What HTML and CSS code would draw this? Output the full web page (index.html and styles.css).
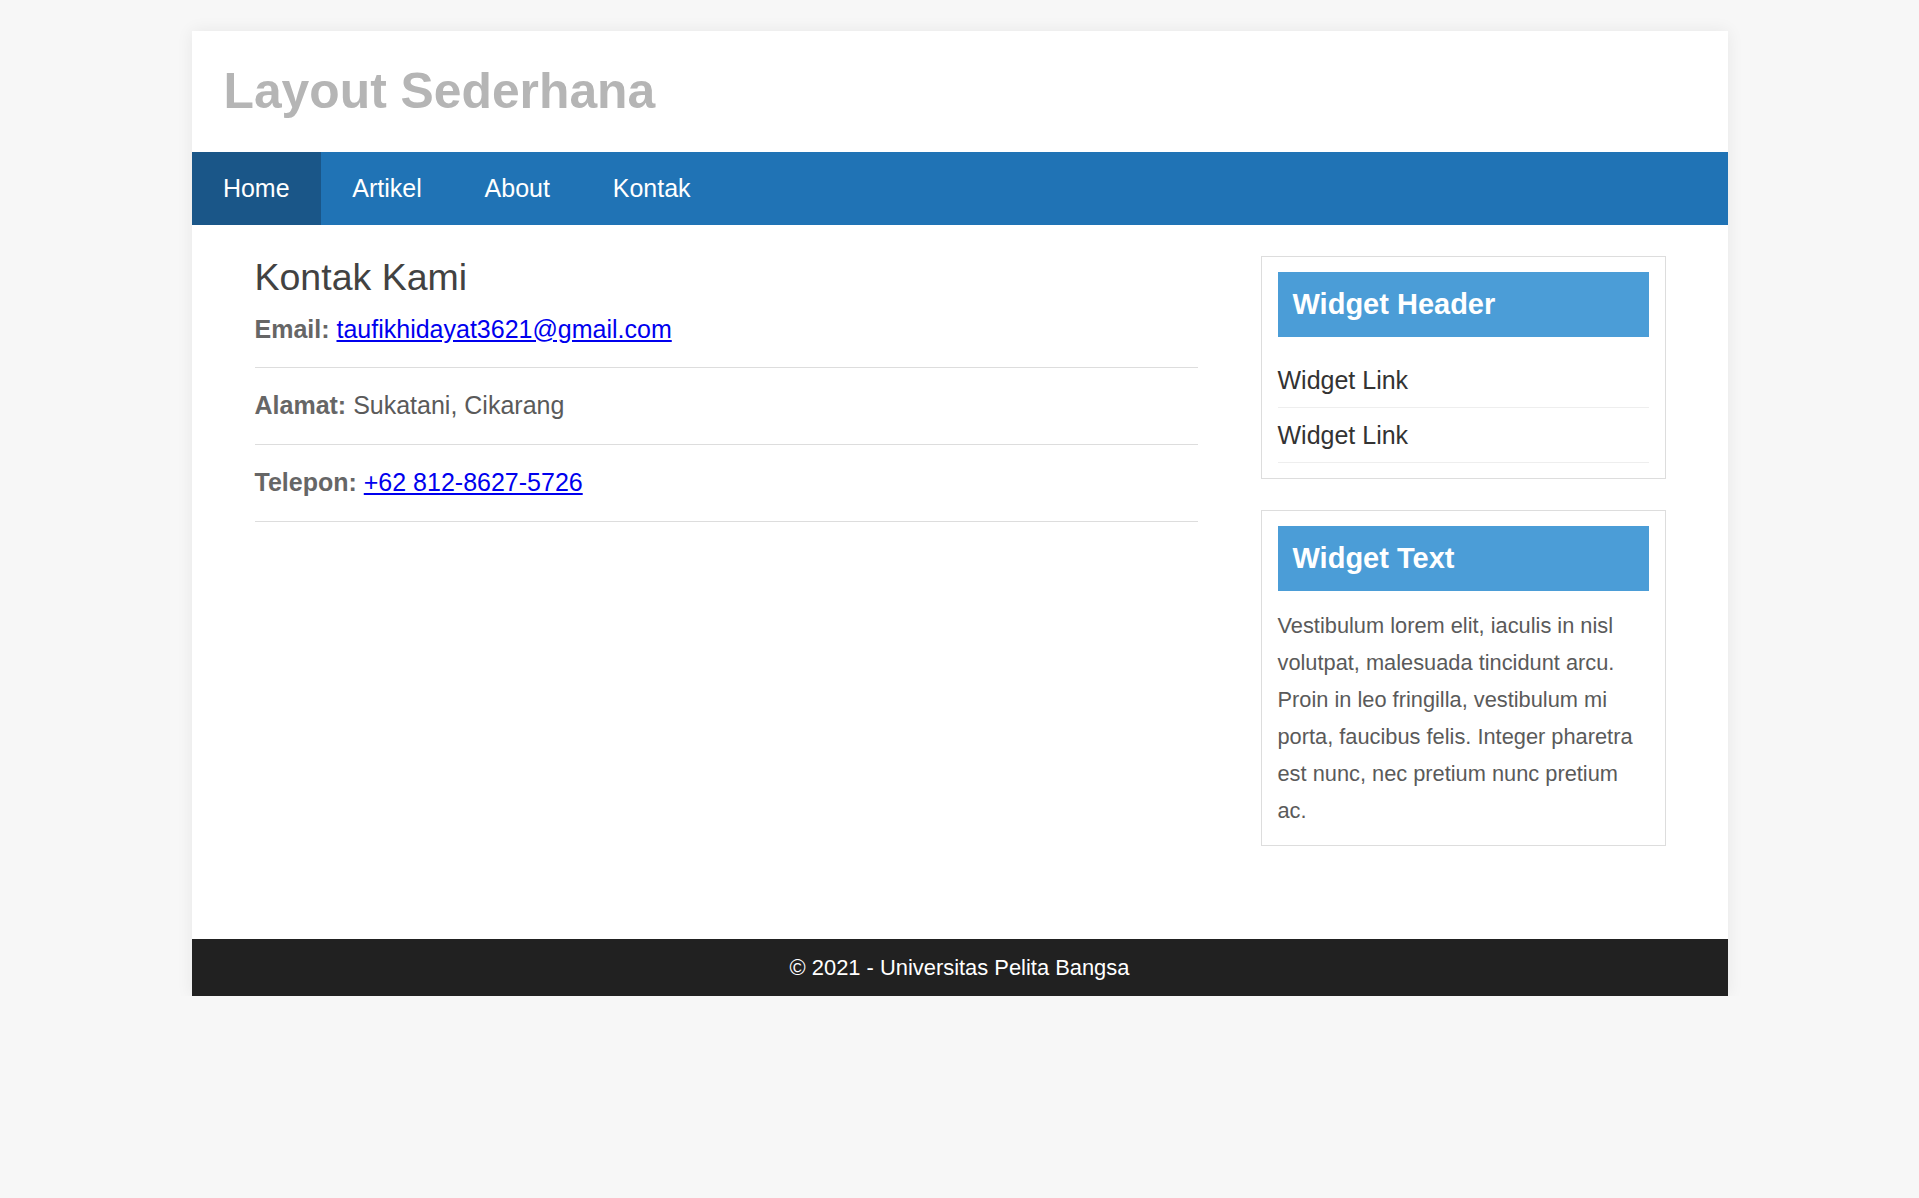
FILE: index.html
```html
<!DOCTYPE html>
<html lang="id">
<head>
<meta charset="utf-8">
<title>Layout Sederhana</title>
<link rel="stylesheet" href="styles.css">
</head>
<body>
<div class="container">
  <header class="site-header">
    <h1 class="site-title">Layout Sederhana</h1>
  </header>
  <nav class="nav">
    <a class="nav-link active" href="#">Home</a>
    <a class="nav-link" href="#">Artikel</a>
    <a class="nav-link" href="#">About</a>
    <a class="nav-link" href="#">Kontak</a>
  </nav>
  <div class="content">
    <main class="main">
      <h2 class="page-title">Kontak Kami</h2>
      <p class="contact-item first"><b class="label">Email:</b> <a class="link" href="#">taufikhidayat3621@gmail.com</a></p>
      <p class="contact-item"><b class="label">Alamat:</b> Sukatani, Cikarang</p>
      <p class="contact-item"><b class="label">Telepon:</b> <a class="link" href="#">+62 812-8627-5726</a></p>
    </main>
    <aside class="sidebar">
      <div class="widget">
        <h3 class="widget-title">Widget Header</h3>
        <ul class="widget-list">
          <li class="widget-item"><a class="widget-link" href="#">Widget Link</a></li>
          <li class="widget-item"><a class="widget-link" href="#">Widget Link</a></li>
        </ul>
      </div>
      <div class="widget">
        <h3 class="widget-title">Widget Text</h3>
        <p class="widget-text">Vestibulum lorem elit, iaculis in nisl volutpat, malesuada tincidunt arcu. Proin in leo fringilla, vestibulum mi porta, faucibus felis. Integer pharetra est nunc, nec pretium nunc pretium ac.</p>
      </div>
    </aside>
  </div>
  <footer class="footer">© 2021 - Universitas Pelita Bangsa</footer>
</div>
</body>
</html>
```

FILE: styles.css
```css
* {
  margin: 0;
  padding: 0;
  box-sizing: border-box;
}

body {
  background: #f7f7f7;
  font-family: "Liberation Sans", Arial, sans-serif;
  color: #5a5a5a;
}

.container {
  width: 1536px;
  margin: 31px auto 0;
  background: #ffffff;
  box-shadow: 0 0 16px rgba(0, 0, 0, 0.07);
}

.site-header {
  height: 121px;
  padding: 0 32px;
  display: flex;
  align-items: center;
}

.site-title {
  font-size: 49.8px;
  font-weight: bold;
  color: #b5b5b5;
  line-height: 56px;
  margin-top: -1px;
}

.nav {
  display: flex;
  background: #2073b5;
}

.nav-link {
  display: block;
  padding: 0 31.4px;
  height: 72.5px;
  line-height: 72.5px;
  font-size: 25px;
  color: #ffffff;
  text-decoration: none;
}

.nav-link.active {
  background: #1a5688;
}

.content {
  display: grid;
  grid-template-columns: 943px 405px;
  column-gap: 63px;
  padding: 31px 62px 62px 63px;
}

.page-title {
  font-size: 37.5px;
  font-weight: normal;
  color: #424242;
  line-height: 43px;
  margin-bottom: 16px;
}

.contact-item {
  font-size: 25px;
  line-height: 28.7px;
  padding: 23px 0 24px;
  border-bottom: 1px solid #dddddd;
  color: #5a5a5a;
}

.contact-item.first {
  padding-top: 0;
}

.label {
  color: #666666;
}

.link {
  color: #0000ee;
}

.widget {
  border: 1px solid #dddddd;
  padding: 15px 16px 15.5px;
  margin-bottom: 31px;
}

.widget-title {
  background: #4b9dd7;
  color: #ffffff;
  font-size: 29px;
  font-weight: bold;
  line-height: 33px;
  padding: 16px 15px;
  margin-bottom: 16px;
}

.widget-list {
  list-style: none;
}

.widget-item {
  font-size: 25px;
  padding: 13px 0 12px;
  border-bottom: 1px solid #eeeeee;
  line-height: 29px;
}

.widget-link {
  color: #333333;
  text-decoration: none;
}

.widget-text {
  font-size: 21.8px;
  line-height: 37px;
  color: #5a5a5a;
}

.footer {
  background: #212121;
  color: #ffffff;
  text-align: center;
  font-size: 21.9px;
  line-height: 25px;
  padding: 16px 0;
}
```
